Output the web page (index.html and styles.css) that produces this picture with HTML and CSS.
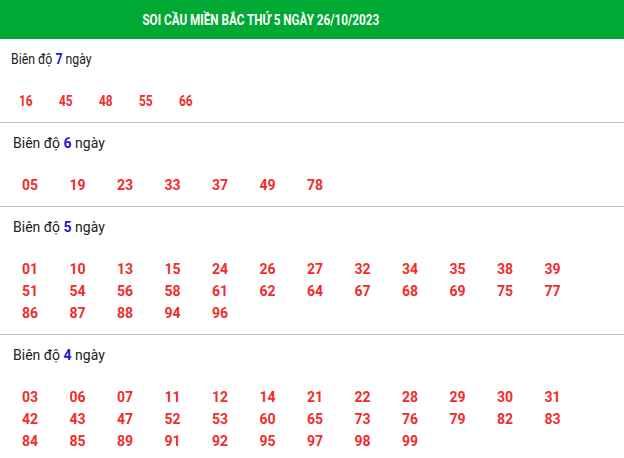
FILE: index.html
```html
<!DOCTYPE html>
<html lang="vi">
<head>
    <meta charset="UTF-8">
    <meta name="viewport" content="width=device-width, initial-scale=1.0">
    <title>Soi cầu miền Bắc</title>
    <link rel="stylesheet" href="styles.css">
</head>
<body>
    <div class="box">
        <div class="box-title"><span>SOI CẦU MIỀN BẮC THỨ 5 NGÀY 26/10/2023</span></div>

        <div class="bd bd-narrow">
            <div class="bd-label"><span>Biên độ <b>7</b> ngày</span></div>
            <div class="bd-nums">
                <span>16</span><span>45</span><span>48</span><span>55</span><span>66</span>
            </div>
        </div>

        <div class="bd">
            <div class="bd-label">Biên độ <b>6</b> ngày</div>
            <div class="bd-nums">
                <span>05</span><span>19</span><span>23</span><span>33</span><span>37</span><span>49</span><span>78</span>
            </div>
        </div>

        <div class="bd">
            <div class="bd-label">Biên độ <b>5</b> ngày</div>
            <div class="bd-nums">
                <span>01</span><span>10</span><span>13</span><span>15</span><span>24</span><span>26</span>
                <span>27</span><span>32</span><span>34</span><span>35</span><span>38</span><span>39</span>
                <span>51</span><span>54</span><span>56</span><span>58</span><span>61</span><span>62</span>
                <span>64</span><span>67</span><span>68</span><span>69</span><span>75</span><span>77</span>
                <span>86</span><span>87</span><span>88</span><span>94</span><span>96</span>
            </div>
        </div>

        <div class="bd">
            <div class="bd-label">Biên độ <b>4</b> ngày</div>
            <div class="bd-nums">
                <span>03</span><span>06</span><span>07</span><span>11</span><span>12</span><span>14</span>
                <span>21</span><span>22</span><span>28</span><span>29</span><span>30</span><span>31</span>
                <span>42</span><span>43</span><span>47</span><span>52</span><span>53</span><span>60</span>
                <span>65</span><span>73</span><span>76</span><span>79</span><span>82</span><span>83</span>
                <span>84</span><span>85</span><span>89</span><span>91</span><span>92</span><span>95</span>
                <span>97</span><span>98</span><span>99</span>
            </div>
        </div>
    </div>
</body>
</html>
```

FILE: styles.css
```css
body {
    margin: 0;
    font-family: Roboto, "Noto Sans", Arial, sans-serif;
    font-size: 14px;
    color: #222;
    background: #fff;
}

/* tieu de */
.box-title {
    height: 39px;
    background: #00a934;
    color: #fff;
    font-weight: bold;
    font-size: 15px;
    display: flex;
    align-items: center;
    justify-content: center;
    padding-right: 102px;
}
.box-title span {
    display: inline-block;
    transform: scaleX(0.78);
}

/* moi bien do */
.bd {
    padding: 10px 0 10px;
    border-bottom: 1px solid #c4c4c4;
}
.bd:last-child {
    border-bottom: none;
}
.bd-label {
    padding-left: 13px;
    line-height: 20px;
}
.bd-label b {
    color: #1a1ad6;
}
.bd-nums {
    display: grid;
    grid-template-columns: repeat(12, 47.5px);
    padding-left: 22px;
    margin-top: 21px;
}
.bd-nums span {
    line-height: 22px;
    font-weight: bold;
    color: #f22b2b;
}

/* bien do 7 bi co hep lai */
.bd-narrow .bd-label span {
    display: inline-block;
    transform: scaleX(0.82);
    transform-origin: left;
}
.bd-narrow .bd-label {
    padding-left: 11px;
    font-size: 15px;
}
.bd-narrow .bd-nums {
    grid-template-columns: repeat(12, 40px);
    padding-left: 19px;
}
.bd-narrow .bd-nums span {
    display: inline-block;
    transform: scaleX(0.85);
    transform-origin: left;
}
```
